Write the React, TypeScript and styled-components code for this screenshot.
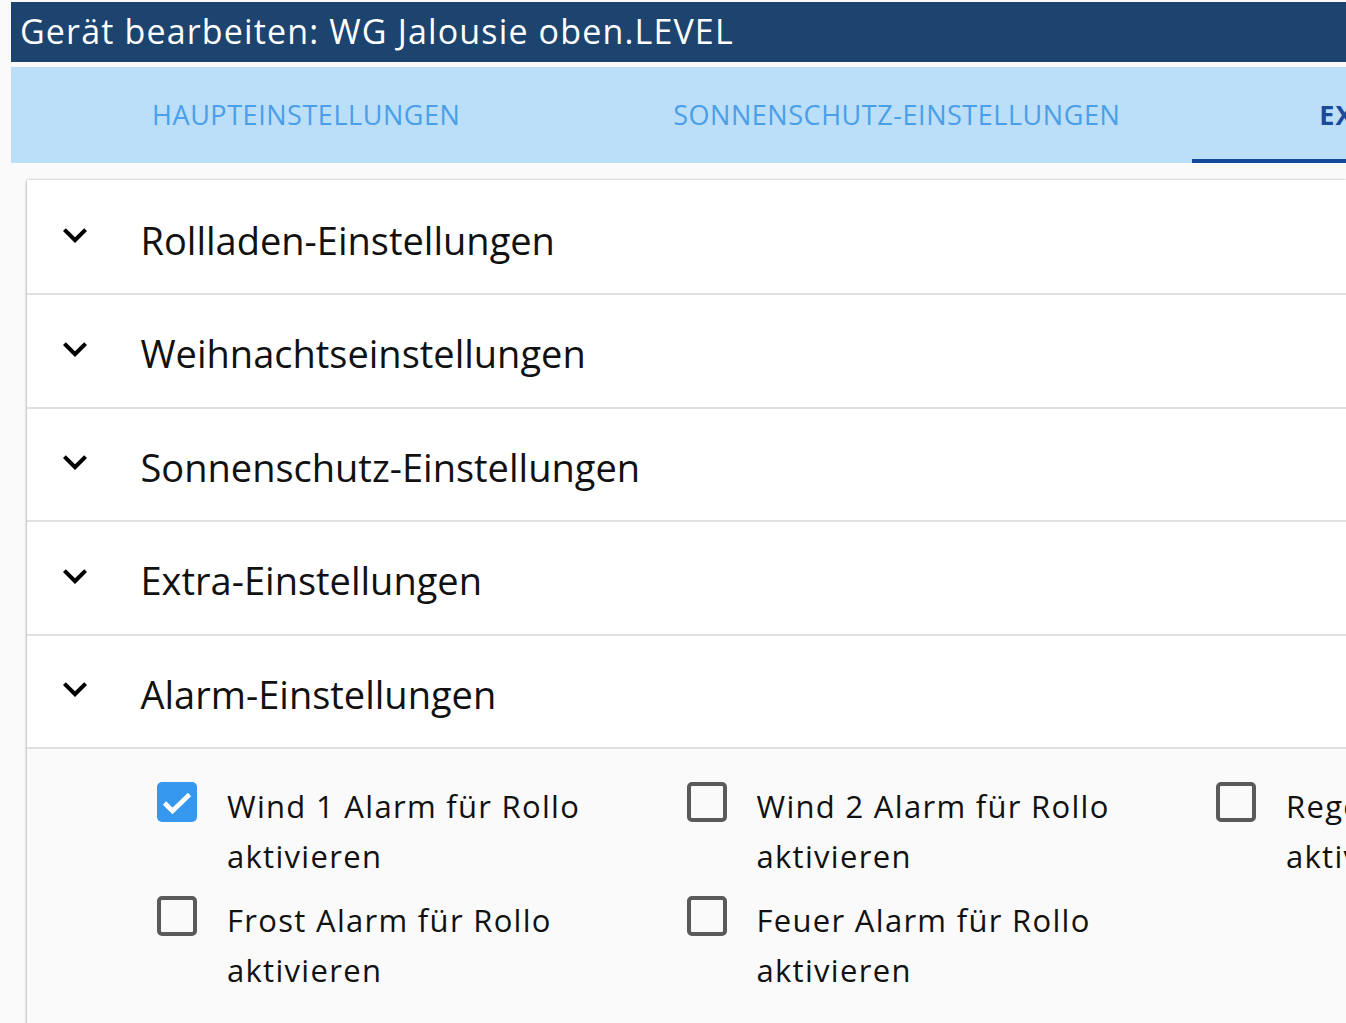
import React from "react";
import styled, { createGlobalStyle } from "styled-components";

const GlobalStyle = createGlobalStyle`
  html, body {
    margin: 0;
    padding: 0;
    background: #fafafa;
    overflow: hidden;
    font-family: "Open Sans", "Noto Sans", sans-serif;
  }
  * { box-sizing: border-box; }
`;

const Page = styled.div`
  padding: 2px 0 0 11px;
  width: 1346px;
  height: 1023px;
  overflow: hidden;
`;

const TitleBar = styled.div`
  height: 60px;
  background: #1d436f;
  color: #ffffff;
  display: flex;
  align-items: center;
  padding: 0 0 2px 9px;
  font-size: 34px;
  letter-spacing: 1.15px;
  white-space: nowrap;
`;

const TabBar = styled.div`
  margin-top: 5px;
  height: 96px;
  background: #bbdef9;
  display: flex;
  overflow: hidden;
`;

const Tab = styled.div<{ $active?: boolean }>`
  flex: 0 0 590.5px;
  display: flex;
  align-items: center;
  justify-content: center;
  font-size: 27px;
  letter-spacing: ${(p) => (p.$active ? "1.1px" : "0.55px")};
  font-weight: ${(p) => (p.$active ? 700 : 400)};
  color: ${(p) => (p.$active ? "#1a4a9c" : "#4a9fe8")};
  white-space: nowrap;
  border-bottom: 4px solid ${(p) => (p.$active ? "#15479c" : "transparent")};
  padding-top: 3px;
`;

const Panel = styled.div`
  margin: 17px 0 0 16px;
  padding-top: 1.5px;
  background: #ffffff;
  box-shadow: 0 2px 3px rgba(0, 0, 0, 0.18), 0 0 2px rgba(0, 0, 0, 0.22),
    -1px 0 3px rgba(0, 0, 0, 0.08);
  overflow: hidden;
  height: 1000px;
`;

const Row = styled.div`
  height: 113.5px;
  display: flex;
  align-items: center;
  padding-left: 24px;
  border-bottom: 2px solid #e0e0e0;
`;

const Chevron = styled.svg`
  width: 48px;
  height: 48px;
  flex: 0 0 48px;
  margin-top: -4px;
  fill: #000000;
`;

const RowTitle = styled.div`
  margin-left: 41.5px;
  padding-top: 5px;
  font-size: 38px;
  color: #111111;
  white-space: nowrap;
`;

const Details = styled.div`
  background: #fafafa;
  height: 400px;
  padding: 31.5px 0 0 130px;
`;

const Grid = styled.div`
  display: grid;
  grid-template-columns: repeat(3, 529.5px);
  row-gap: 14px;
  width: 1590px;
`;

const Item = styled.label`
  display: flex;
  align-items: flex-start;
  gap: 30px;
`;

const Box = styled.span<{ $checked?: boolean }>`
  flex: 0 0 40px;
  width: 40px;
  height: 40px;
  margin-top: 1px;
  border-radius: 5px;
  border: ${(p) => (p.$checked ? "none" : "4px solid #5a5a5a")};
  background: ${(p) => (p.$checked ? "#3597ee" : "transparent")};
  display: flex;
  align-items: center;
  justify-content: center;
`;

const Label = styled.span`
  font-size: 31px;
  line-height: 50px;
  letter-spacing: 1.3px;
  color: #111111;
  width: 440px;
`;

const ExpandMore = () => (
  <Chevron viewBox="0 0 24 24">
    <path d="M16.59 8.59 12 13.17 7.41 8.59 6 10l6 6 6-6z" />
  </Chevron>
);

const Check = () => (
  <svg width="40" height="40" viewBox="0 0 40 40">
    <polyline
      points="7.5,21 15.5,29 32.5,12.5"
      fill="none"
      stroke="#ffffff"
      strokeWidth="4.6"
      strokeLinecap="butt"
      strokeLinejoin="miter"
    />
  </svg>
);

const sections = [
  "Rollladen-Einstellungen",
  "Weihnachtseinstellungen",
  "Sonnenschutz-Einstellungen",
  "Extra-Einstellungen",
  "Alarm-Einstellungen",
];

const alarms = [
  { label: "Wind 1 Alarm für Rollo aktivieren", checked: true },
  { label: "Wind 2 Alarm für Rollo aktivieren", checked: false },
  { label: "Regen Alarm für Rollo aktivieren", checked: false },
  { label: "Frost Alarm für Rollo aktivieren", checked: false },
  { label: "Feuer Alarm für Rollo aktivieren", checked: false },
];

export default function App() {
  return (
    <>
      <GlobalStyle />
      <Page>
        <TitleBar>Gerät bearbeiten: WG Jalousie oben.LEVEL</TitleBar>
        <TabBar>
          <Tab>HAUPTEINSTELLUNGEN</Tab>
          <Tab>SONNENSCHUTZ-EINSTELLUNGEN</Tab>
          <Tab $active>EXTRA-EINSTELLUNGEN</Tab>
        </TabBar>
        <Panel>
          {sections.map((s) => (
            <Row key={s}>
              <ExpandMore />
              <RowTitle>{s}</RowTitle>
            </Row>
          ))}
          <Details>
            <Grid>
              {alarms.map((a) => (
                <Item key={a.label}>
                  <Box $checked={a.checked}>{a.checked && <Check />}</Box>
                  <Label>{a.label}</Label>
                </Item>
              ))}
            </Grid>
          </Details>
        </Panel>
      </Page>
    </>
  );
}
